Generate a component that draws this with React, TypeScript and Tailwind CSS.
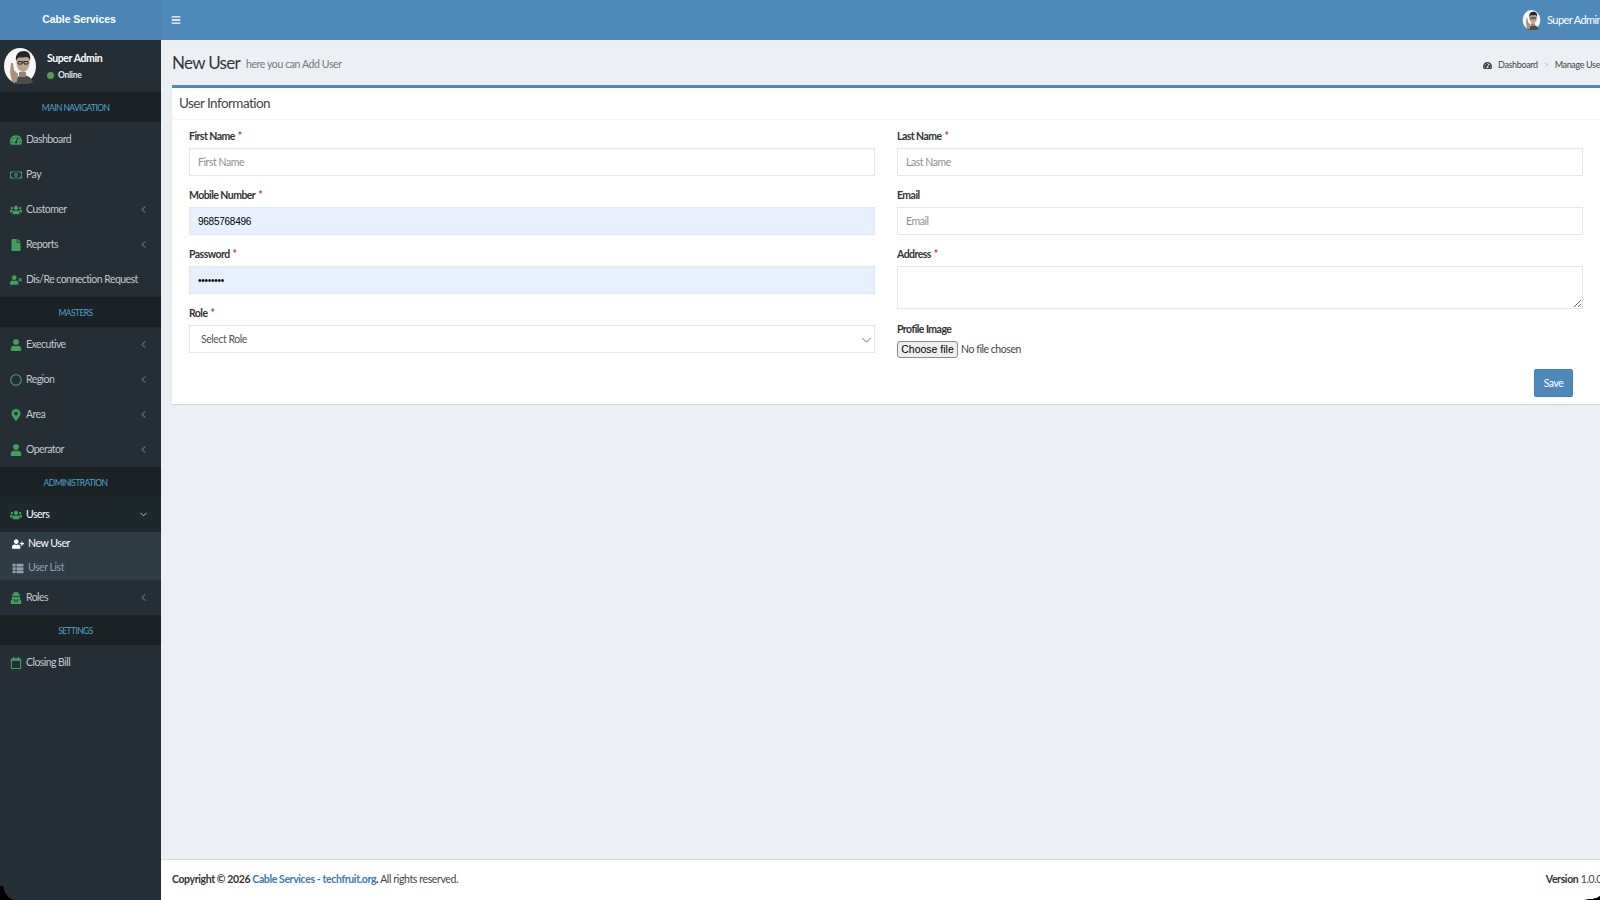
import type { ReactNode } from "react";
import { ChevronDown, ChevronLeft } from "lucide-react";
import {
  FaBars,
  FaFile,
  FaMapMarkerAlt,
  FaRegCalendar,
  FaRegCircle,
  FaRegMoneyBillAlt,
  FaTachometerAlt,
  FaThList,
  FaUser,
  FaUserPlus,
  FaUserSecret,
  FaUserTimes,
  FaUsers,
} from "react-icons/fa";

const Avatar = ({ className }: { className: string }) => (
  <svg viewBox="0 0 32 36" className={className}>
    <ellipse cx="16" cy="18" rx="16" ry="18" fill="#f6f6f6" />
    <path d="M10 36c1-6 5-9 9-9s8 2 10 7c-3 2-10 3-19 2z" fill="#4d4d4d" />
    <path d="M8 34l-2-10 1-9 2 0 1 7 4 4-1 8z" fill="#a9917f" />
    <path d="M15 24h7v5h-7z" fill="#9c8272" />
    <ellipse cx="19" cy="15" rx="6.5" ry="9" fill="#bda391" />
    <path d="M12 13c-1-7 3-10 8-10s7 4 6 10c-1-3-2-4-4-4-4 1-7 0-8 1z" fill="#262626" />
    <path d="M14 13.5h4v2.5h-4zM20 13.5h4v2.5h-4zM18 14h2" fill="none" stroke="#1f1f1f" strokeWidth="0.9" />
  </svg>
);

const SectionHeader = ({ title }: { title: string }) => (
  <div className="flex h-[30px] items-center justify-center bg-[#1a2226] pr-[10px] pt-[2px] text-[8.5px] tracking-[-0.6px] text-[#4ea3cf]">
    {title}
  </div>
);

const NavItem = ({
  icon,
  label,
  arrow,
  open,
}: {
  icon: ReactNode;
  label: string;
  arrow?: boolean;
  open?: boolean;
}) => (
  <div
    className={`flex h-[35px] items-center pl-[10px] pr-[12px] ${
      open ? "bg-[#1e282c] text-white" : "text-[#c2c9cc]"
    }`}
  >
    <span className="flex w-[16px] justify-start text-[12px] text-[#42a05f]">{icon}</span>
    <span className="flex-1 whitespace-nowrap text-[10.5px] tracking-[-0.55px]">{label}</span>
    {arrow && !open && <ChevronLeft size={11} strokeWidth={1.6} className="text-[#a9b8be]" />}
    {open && <ChevronDown size={11} strokeWidth={1.8} className="text-[#d5dde0]" />}
  </div>
);

const Label = ({ text, required }: { text: string; required?: boolean }) => (
  <div className="h-[16px] text-[10.5px] font-bold leading-[16px] tracking-[-0.55px] text-[#333]">
    {text}
    {required && <span className="ml-[3px] text-[#c0392b]">*</span>}
  </div>
);

const Field = ({
  label,
  required,
  placeholder,
}: {
  label: string;
  required?: boolean;
  placeholder: string;
}) => (
  <div className="flex flex-col gap-[4px]">
    <Label text={label} required={required} />
    <input
      placeholder={placeholder}
      className="h-[28px] w-full border border-[#e4e6e9] bg-white px-[8px] pb-[1px] text-[10.5px] outline-none placeholder:text-[#8b8f94]"
    />
  </div>
);

const AutofilledField = ({
  label,
  value,
  type,
}: {
  label: string;
  value: string;
  type: string;
}) => (
  <div className="flex flex-col gap-[4px]">
    <Label text={label} required />
    <input
      readOnly
      type={type}
      value={value}
      className="h-[28px] w-full border border-[#e0e6f2] bg-[#e8f0fe] px-[8px] font-['Liberation_Sans',sans-serif] text-[10px] tracking-[-0.25px] text-black outline-none"
    />
  </div>
);

export default function App() {
  return (
    <div className="relative flex h-screen w-[1600px] overflow-hidden bg-[#ecf0f5] font-['Lato',sans-serif] tracking-[-0.45px]">
      {/* Sidebar */}
      <aside className="flex w-[161px] shrink-0 flex-col bg-[#252e35]">
        <div className="flex h-[40px] shrink-0 items-center justify-center bg-[#4c85b5] pr-[3px] font-['Liberation_Sans',sans-serif] text-[10.5px] font-bold tracking-[-0.1px] text-white">
          Cable Services
        </div>
        <div className="flex h-[52px] shrink-0 items-center pl-[4px]">
          <Avatar className="h-[36px] w-[32px]" />
          <div className="ml-[11px] flex flex-col gap-[8px]">
            <span className="text-[10.5px] font-bold leading-none tracking-[-0.4px] text-white">Super Admin</span>
            <span className="flex items-center gap-[4px] text-[8.5px] font-bold leading-none tracking-[-0.3px] text-[#dfe4e6]">
              <span className="h-[7px] w-[7px] rounded-full bg-[#5a9a4f]" />
              Online
            </span>
          </div>
        </div>
        <SectionHeader title="MAIN NAVIGATION" />
        <NavItem icon={<FaTachometerAlt />} label="Dashboard" />
        <NavItem icon={<FaRegMoneyBillAlt />} label="Pay" />
        <NavItem icon={<FaUsers />} label="Customer" arrow />
        <NavItem icon={<FaFile />} label="Reports" arrow />
        <NavItem icon={<FaUserTimes />} label="Dis/Re connection Request" />
        <SectionHeader title="MASTERS" />
        <NavItem icon={<FaUser />} label="Executive" arrow />
        <NavItem icon={<FaRegCircle />} label="Region" arrow />
        <NavItem icon={<FaMapMarkerAlt />} label="Area" arrow />
        <NavItem icon={<FaUser />} label="Operator" arrow />
        <SectionHeader title="ADMINISTRATION" />
        <NavItem icon={<FaUsers />} label="Users" open />
        <div className="flex h-[48px] flex-col justify-center bg-[#2f3c44] pl-[12px] text-[10.5px]">
          <div className="flex h-[24px] items-center text-white">
            <FaUserPlus className="mr-[4px] w-[12px] text-[12px]" />
            New User
          </div>
          <div className="flex h-[24px] items-center text-[#8aa4af]">
            <FaThList className="mr-[4px] w-[12px] text-[11px]" />
            User List
          </div>
        </div>
        <NavItem icon={<FaUserSecret />} label="Roles" arrow />
        <SectionHeader title="SETTINGS" />
        <NavItem icon={<FaRegCalendar />} label="Closing Bill" />
      </aside>

      {/* Main column */}
      <div className="flex min-w-0 flex-1 flex-col">
        <header className="flex h-[40px] shrink-0 items-center bg-[#4f89b9] pl-[10px] text-white">
          <FaBars className="mb-[1px] text-[10px]" />
          <div className="ml-auto mr-[-2px] flex items-center gap-[6px] whitespace-nowrap text-[11px] tracking-[-0.6px]">
            <Avatar className="h-[20px] w-[19px]" />
            Super Admin
          </div>
        </header>

        <div className="flex flex-1 flex-col pl-[11px]">
          <div className="flex h-[45px] items-center">
            <h1 className="text-[17px] leading-none tracking-[-0.7px] text-[#333]">New User</h1>
            <span className="ml-[6px] mt-[5px] text-[10.5px] tracking-[-0.4px] text-[#777]">here you can Add User</span>
            <div className="ml-auto mr-[-3px] mt-[5px] flex items-center whitespace-nowrap text-[9px] tracking-[-0.35px] text-[#444]">
              <FaTachometerAlt className="mr-[6px] text-[9px]" />
              Dashboard
              <span className="mx-[6px] text-[#bbb]">&gt;</span>
              Manage User
            </div>
          </div>

          {/* Card */}
          <div className="h-[319px] shrink-0 border-t-[3px] border-[#4f89b9] bg-white shadow-[0_1px_1px_rgba(0,0,0,0.1)]">
            <div className="flex h-[32px] items-center border-b border-[#f4f4f4] pl-[7px] text-[13.5px] tracking-[-0.55px] text-[#444]">
              User Information
            </div>
            <div className="grid grid-cols-2 gap-x-[22px] pl-[17px] pr-[17px] pt-[8px]">
              <div className="flex flex-col gap-[11px]">
                <Field label="First Name" required placeholder="First Name" />
                <AutofilledField label="Mobile Number" value="9685768496" type="text" />
                <AutofilledField label="Password" value="password" type="password" />
                <div className="flex flex-col gap-[4px]">
                  <Label text="Role" required />
                  <div className="flex h-[28px] items-center justify-between border border-[#e4e6e9] pl-[11px] pr-[2px] pt-[1px] text-[10.5px] text-[#555]">
                    Select Role
                    <svg viewBox="0 0 12 7" className="h-[6px] w-[11px]" fill="none" stroke="#555" strokeWidth="1">
                      <path d="M1 1l5 5 5-5" />
                    </svg>
                  </div>
                </div>
              </div>
              <div className="flex flex-col gap-[11px]">
                <Field label="Last Name" required placeholder="Last Name" />
                <Field label="Email" placeholder="Email" />
                <div className="flex flex-col gap-[4px]">
                  <Label text="Address" required />
                  <textarea className="h-[43px] w-full border border-[#e4e6e9] outline-none" />
                </div>
                <div className="mt-[1px] flex flex-col gap-[4px]">
                  <Label text="Profile Image" />
                  <div className="flex items-center text-[10.5px] text-[#444]">
                    <span className="flex h-[17px] w-[61px] items-center justify-center rounded-[3px] border border-[#8a8a8a] bg-[#efefef] font-['Liberation_Sans',sans-serif] text-[10.5px] tracking-normal text-black">
                      Choose file
                    </span>
                    <span className="ml-[3px]">No file chosen</span>
                  </div>
                </div>
              </div>
            </div>
            <div className="flex justify-end pr-[27px] pt-[11px]">
              <button className="h-[28px] w-[39px] rounded-[2px] border border-[#4a80ad] bg-[#4f89b9] pt-[1px] text-[10.5px] text-white">
                Save
              </button>
            </div>
          </div>
          <div className="flex-1" />
        </div>

        <footer className="flex h-[41px] shrink-0 items-center justify-between whitespace-nowrap border-t border-[#d8dde3] bg-white pl-[11px] text-[10.5px] tracking-[-0.38px] text-[#444]">
          <div>
            <b className="text-[#333]">Copyright © 2026 </b>
            <b className="text-[#3c7ab0]">Cable Services - techfruit.org</b>
            <b className="text-[#333]">.</b> All rights reserved.
          </div>
          <div className="mr-[-2px]">
            <b className="text-[#333]">Version</b> 1.0.0
          </div>
        </footer>
      </div>

      {/* Rounded window corners of the capture */}
      <div className="pointer-events-none absolute bottom-0 left-0 h-[14px] w-[18px] bg-[radial-gradient(circle_at_100%_0,transparent_14px,#000_15px)]" />
      <div className="pointer-events-none absolute bottom-0 right-0 h-[4px] w-[22px] bg-[radial-gradient(ellipse_at_0_0,transparent_20px,#000_22px)]" />
    </div>
  );
}
